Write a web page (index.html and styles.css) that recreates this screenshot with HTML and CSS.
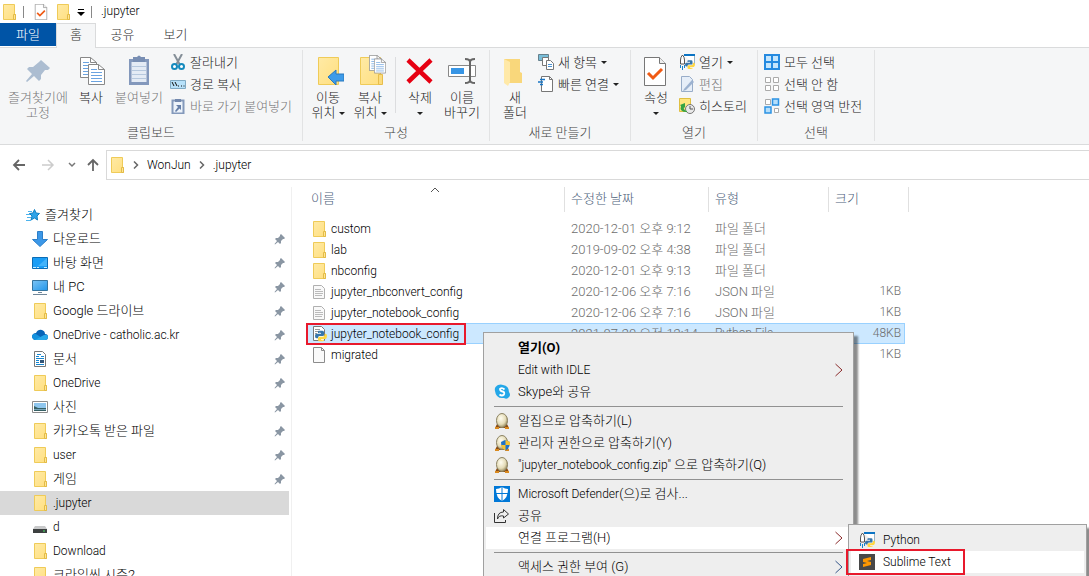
FILE: index.html
```
<!DOCTYPE html>
<html lang="ko">
<head>
    <meta charset="UTF-8">
    <title>.jupyter</title>
    <link rel="stylesheet" href="styles.css">
</head>
<body>
    <svg class="sprite" aria-hidden="true">
        <linearGradient id="gFolder" x1="0" y1="0" x2="1" y2="1">
            <stop offset="0" stop-color="#ffeaa5"/><stop offset="1" stop-color="#ffdf80"/>
        </linearGradient>
        <linearGradient id="gBlue" x1="0" y1="0" x2="1" y2="1">
            <stop offset="0" stop-color="#7cc4f5"/><stop offset="1" stop-color="#2196ea"/>
        </linearGradient>
        <radialGradient id="gEgg" cx=".4" cy=".35" r=".7">
            <stop offset="0" stop-color="#fffdf0"/><stop offset=".6" stop-color="#e5dcb8"/><stop offset="1" stop-color="#8a7d50"/>
        </radialGradient>
        <symbol id="folder" viewBox="0 0 16 16">
            <path d="M2.500.5h11v10h1v5h-12z" fill="url(#gFolder)" stroke="#efcb58"/>
            <path d="M12.5 15.5v-5h2v5z" fill="#ffe694" stroke="#e3bb48"/>
        </symbol>
        <symbol id="pin" viewBox="0 0 12 12">
            <path d="M7 1l4 4-1 1h-1L7 8v2L6 11 4 9 1 11.500.5 11 3 8 1 6l1-1h2l2-2V2z" fill="#8a96a3"/>
        </symbol>
        <symbol id="text" viewBox="0 0 16 16">
            <path d="M2.500 1.500h8l3 3v10h-11z" fill="#f9f9f9" stroke="#b0b0b0"/>
            <path d="M4 5.500h6M4 7.500h8M4 9.500h8M4 11.500h7" stroke="#bbb"/>
        </symbol>
        <symbol id="blank" viewBox="0 0 16 16">
            <path d="M2.500.5h8l3 3v12h-11z" fill="#fafafa" stroke="#8c8c8c"/>
            <path d="M10.500.5v3h3" fill="none" stroke="#8c8c8c"/>
        </symbol>
        <symbol id="snake" viewBox="0 0 16 16">
            <path d="M5 1h5q2 0 2 2v4q0 1-2 1H6q-2 0-2 3H2Q0 11 0 8t2-3h6V4H4V2q0-1 1-1z" fill="#3776ab"/>
            <path d="M11 15H6q-2 0-2-2v-2q0-2 2-2h4q3 0 3-4h1q2 0 2 3t-2 4H8v1h4v1q0 1-1 1z" fill="#ffd743"/>
            <path d="M6 3h1M10 13.500h1" stroke="#fff"/>
        </symbol>
        <symbol id="pyfile" viewBox="0 0 16 16">
            <path d="M2.500.5h8l3 3v11h-11z" fill="#fff" stroke="#777"/>
            <path d="M4 3.500h5M4 5.500h3M4 7.500h2" stroke="#999"/>
            <use href="#snake" x="4" y="4" width="12" height="12"/>
        </symbol>
        <symbol id="launcher" viewBox="0 0 16 16">
            <path d="M5 1.500h10.500V10" fill="#fff" stroke="#9bb3c4"/><path d="M5 1h11" stroke="#0b74c4" stroke-width="2"/>
            <path d="M1.500 10V6Q1.500 3 3.500 1q2 2 2 5v4z" fill="#fff" stroke="#555"/>
            <path d="M1.500 11v3M3.500 12v4M5.500 11v3" stroke="#1683cc"/>
            <use href="#snake" x="6" y="5" width="10" height="11"/>
        </symbol>
        <symbol id="checkdoc" viewBox="0 0 22 29">
            <path d="M.5.5h15l6 6v22H.5z" fill="#fff" stroke="#777"/>
            <path d="M15.500.5v6h6" fill="#eee" stroke="#777"/>
            <path d="M4 16l5 5 9-9" fill="none" stroke="#f05a14" stroke-width="3"/>
        </symbol>
        <symbol id="sheet" viewBox="0 0 17 21">
            <path d="M.5.5h10l6 5v15H.5z" fill="#fff" stroke="#888"/>
            <path d="M10.500.5v5h6" fill="none" stroke="#888"/>
            <path d="M3 5.500h6M3 8.500h11M3 11.500h11M3 14.500h11M3 17.500h11" stroke="#6ba3e0"/>
        </symbol>
        <symbol id="egg" viewBox="0 0 16 16">
            <path d="M1 15l2-4h10l2 4z" fill="#8a4a10"/><path d="M1 14h4v2H1zM11 14h4v2h-4z" fill="#d98a20"/>
            <ellipse cx="8" cy="7.500" rx="5.500" ry="7" fill="url(#gEgg)" stroke="#8b8262"/>
        </symbol>
        <symbol id="more" viewBox="0 0 8 14"><path d="M.5 1l6.500 6-6.500 6" fill="none" stroke="currentColor"/></symbol>
        <symbol id="next" viewBox="0 0 6 8"><path d="M1 .5L4.500 4 1 7.500" fill="none" stroke="#666" stroke-width="1.500"/></symbol>
    </svg>

    <header class="titlebar">
        <svg class="icon"><use href="#folder"/></svg>
        <span class="bar"></span>
        <button class="quick" aria-label="속성"><svg class="quick-check"><use href="#checkdoc"/></svg></button>
        <button class="quick" aria-label="새 폴더"><svg class="icon"><use href="#folder"/></svg></button>
        <button class="quick" aria-label="빠른 실행 사용자 지정"><svg class="custom" viewBox="0 0 8 8"><path d="M1 1.500h6" stroke="#000"/><path d="M0 4h8L4 8z"/></svg></button>
        <span class="bar"></span>
        <h1 class="title en">.jupyter</h1>
    </header>

    <nav class="tabs">
        <button class="tab tab-file">파일</button>
        <button class="tab tab-active">홈</button>
        <button class="tab">공유</button>
        <button class="tab">보기</button>
    </nav>

    <section class="ribbon">
        <div class="group group-clipboard">
            <div class="tools">
                <button class="big big-wide disabled">
                    <svg class="big-icon" viewBox="0 0 32 32"><path d="M19 5l9 8-2 2h-3l-4 5v4l-2 2-5-5-7 6-1-1 6-7-5-5 2-2h4l6-5V7z" fill="#acbdd1"/></svg>
                    <span>즐겨찾기에<br>고정</span>
                </button>
                <button class="big big-copy">
                    <svg class="big-icon" viewBox="0 0 32 32"><use href="#sheet" x="5" y="2" width="17" height="21"/><use href="#sheet" x="13" y="9" width="17" height="21"/></svg>
                    <span>복사</span>
                </button>
                <button class="big big-paste disabled">
                    <svg class="big-icon" viewBox="0 0 32 32"><path d="M6 4h20v26H6z" fill="#8398bc"/><path d="M8.500 7h15v20h-15z" fill="#e4ebf5"/><path d="M10 2h4q2-3 4 0h4v5H10z" fill="#788eb3"/><path d="M9 11.500h14M9 15.500h14M9 19.500h14M9 23.500h14" stroke="#b6c8de"/></svg>
                    <span>붙여넣기</span>
                </button>
                <div class="smalls">
                    <button class="small"><svg class="icon" viewBox="0 0 16 16"><path d="M4 0l6 11M12 0L6 11" stroke="#858f98" stroke-width="2"/><circle cx="4.500" cy="12.500" r="2.500" fill="#fff" stroke="#168abd" stroke-width="2"/><circle cx="11.500" cy="12.500" r="2.500" fill="#fff" stroke="#168abd" stroke-width="2"/></svg>잘라내기</button>
                    <button class="small"><svg class="icon" viewBox="0 0 16 16"><path d="M.5 4.500h15v8H.5z" fill="#b7e1fa" stroke="#80aac4"/><path d="M2 6l2 4M5 6l2 4M8 10h1M11 10h1M13.500 10h1" stroke="#111"/></svg>경로 복사</button>
                    <button class="small disabled"><svg class="icon" viewBox="0 0 16 16"><path d="M2.500 2.500h11v13h-11z" fill="#edf3fa" stroke="#8499bb" stroke-width="2"/><path d="M5 1h6v3H5z" fill="#7288ad"/><path d="M6 7h5v5L9.500 10.500 6 14l-1-1 3-4z" fill="#667fa8"/></svg>바로 가기 붙여넣기</button>
                </div>
            </div>
            <div class="group-name">클립보드</div>
        </div>

        <div class="group group-organize">
            <div class="tools">
                <button class="big">
                    <svg class="big-icon" viewBox="0 0 32 32"><path d="M6.500 2.500h20v27h-20z" fill="url(#gFolder)" stroke="#efcb58"/><path d="M16 22l8-7v4h8v7h-8v4z" fill="#3d9be9" stroke="#2a79bd"/></svg>
                    <span>이동<br>위치 <i class="drop"></i></span>
                </button>
                <button class="big">
                    <svg class="big-icon" viewBox="0 0 32 32"><path d="M6.500 2.500h20v27h-20z" fill="url(#gFolder)" stroke="#efcb58"/><path d="M24.500 19.500h4v10h-4z" fill="#fbdb7d" stroke="#e7bd4b"/><use href="#sheet" x="15" y="0" width="13" height="16"/><use href="#sheet" x="20" y="3" width="12" height="16"/></svg>
                    <span>복사<br>위치 <i class="drop"></i></span>
                </button>
                <span class="divider"></span>
                <button class="big">
                    <svg class="big-icon" viewBox="0 0 32 32"><path d="M4 5l23 22M27 5L4 27" stroke="#e60012" stroke-width="4.500"/></svg>
                    <span>삭제<br><i class="drop"></i></span>
                </button>
                <button class="big">
                    <svg class="big-icon" viewBox="0 0 32 32"><path d="M2.500 10.500h27v11h-27z" fill="#fff" stroke="#888"/><path d="M5 13h13v6H5z" fill="#3795e5"/><path d="M19 4q5 0 5 3v18q0 3-5 3M29 4q-5 0-5 3M24 25q0 3 5 3" fill="none" stroke="#666" stroke-width="2"/></svg>
                    <span>이름<br>바꾸기</span>
                </button>
            </div>
            <div class="group-name">구성</div>
        </div>

        <div class="group group-new">
            <div class="tools">
                <button class="big">
                    <svg class="big-icon" viewBox="0 0 32 32"><path d="M5 4h16v13l2 1v10H10z" fill="#f9d77b"/><path d="M5 4l6 3v20l-2 4-4-3z" fill="#ffe9a8"/></svg>
                    <span>새<br>폴더</span>
                </button>
                <div class="smalls">
                    <button class="small"><svg class="icon" viewBox="0 0 16 16"><path d="M.5.5h10v6H.5z" fill="#78bdd8" stroke="#65808c"/><path d="M4.500 3.500h6v8h-6z" fill="#fff" stroke="#777"/><path d="M8.500 6.500h4l3 3v6h-7z" fill="#fff" stroke="#777"/><path d="M10 10.500h4M10 12.500h4" stroke="#4b92d2"/></svg>새 항목 <i class="drop"></i></button>
                    <button class="small"><svg class="icon" viewBox="0 0 16 16"><path d="M3.500.5h8l3 3v12h-11z" fill="#fff" stroke="#777"/><path d="M11.500.5v3h3" fill="none" stroke="#777"/><path d="M2 3.500h5M0 6h5M2 8.500h3" stroke="#1775c5" stroke-width="1.500"/></svg>빠른 연결 <i class="drop"></i></button>
                </div>
            </div>
            <div class="group-name">새로 만들기</div>
        </div>

        <div class="group group-open">
            <div class="tools">
                <button class="big">
                    <svg class="big-icon" viewBox="0 0 32 32"><use href="#checkdoc" x="4" y="2" width="22" height="29"/></svg>
                    <span>속성<br><i class="drop"></i></span>
                </button>
                <div class="smalls">
                    <button class="small"><svg class="icon"><use href="#launcher"/></svg>열기 <i class="drop"></i></button>
                    <button class="small disabled"><svg class="icon" viewBox="0 0 16 16"><path d="M2.500.5h8l3 3v12h-11z" fill="#e6eef8" stroke="#98adc9"/><path d="M5 13l8-9 2 2-8 8-3 1z" fill="#9cb2d0"/></svg>편집</button>
                    <button class="small"><svg class="icon" viewBox="0 0 16 16"><path d="M.5.5h11v13H.5z" fill="#ffe680" stroke="#dfbf42"/><circle cx="11" cy="11" r="4.500" fill="#e9e9e9" stroke="#777"/><path d="M11 8v3h3" fill="none" stroke="#555"/><path d="M8 14Q0 14 2 8l-1-1 5-2v5l-1-1q-1 3 3 4z" fill="#35a344"/></svg>히스토리</button>
                </div>
            </div>
            <div class="group-name">열기</div>
        </div>

        <div class="group group-select">
            <div class="tools">
                <div class="smalls">
                    <button class="small"><svg class="icon" viewBox="0 0 16 16"><path d="M1 1h14v14H1zM8 1v14M1 8h14" fill="#c5e6fd" stroke="#258ae0" stroke-width="2"/></svg>모두 선택</button>
                    <button class="small"><svg class="icon" viewBox="0 0 16 16"><path d="M1.500 1.500h5v5h-5zM9.500 1.500h5v5h-5zM1.500 9.500h5v5h-5zM9.500 9.500h5v5h-5z" fill="#fff" stroke="#aaa"/></svg>선택 안 함</button>
                    <button class="small"><svg class="icon" viewBox="0 0 16 16"><path d="M1.500 1.500h5v5h-5zM10.500 10.500h4v4h-4z" fill="#fff" stroke="#aaa"/><path d="M8.500 1h6v6h-6zM1 9h6v6H1z" fill="#b5defb" stroke="#2b92e4" stroke-width="1.500"/></svg>선택 영역 반전</button>
                </div>
            </div>
            <div class="group-name">선택</div>
        </div>
    </section>

    <div class="address">
        <button class="nav-button" aria-label="뒤로"><svg viewBox="0 0 14 14"><path d="M13 7H2M7 2L2 7l5 5" fill="none" stroke="#666" stroke-width="1.800"/></svg></button>
        <button class="nav-button nav-forward" aria-label="앞으로"><svg viewBox="0 0 14 14"><path d="M1 7h11M7 2l5 5-5 5" fill="none" stroke="#ccc" stroke-width="1.500"/></svg></button>
        <button class="nav-button nav-recent" aria-label="최근 위치"><svg viewBox="0 0 14 14"><path d="M4 5l3 3 3-3" fill="none" stroke="#777" stroke-width="1.500"/></svg></button>
        <button class="nav-button nav-up" aria-label="위로"><svg viewBox="0 0 14 14"><path d="M7 13V2M2 7l5-5 5 5" fill="none" stroke="#666" stroke-width="1.800"/></svg></button>
        <div class="path">
            <svg class="icon"><use href="#folder"/></svg>
            <svg class="next"><use href="#next"/></svg>
            <a class="crumb en" href="#">WonJun</a>
            <svg class="next"><use href="#next"/></svg>
            <a class="crumb en" href="#">.jupyter</a>
        </div>
    </div>

    <main class="main">
        <aside class="sidebar">
            <a class="place place-root" href="#"><svg class="icon" viewBox="0 0 16 16"><path d="M9.500 2.500l1.500 3.500 3.500.5-2.500 2.500.5 4-3-2-3.500 2 1-4-2.500-2.500 3.500-.5z" fill="#2da3e8" stroke="#0f80c4"/><path d="M3 4.500h4M1 7.500h4M2 10.500h4M1 13.500h5" stroke="#4db3ec"/></svg>즐겨찾기</a>
            <a class="place" href="#"><svg class="icon" viewBox="0 0 16 16"><path d="M5.500.5h5v8h5L8 15.500.5 8.500h5z" fill="#3c98e8" stroke="#2c7fc9"/></svg>다운로드<svg class="pin"><use href="#pin"/></svg></a>
            <a class="place" href="#"><svg class="icon" viewBox="0 0 16 16"><path d="M.5 2.500h15v11H.5z" fill="#1a9df5" stroke="#0b6cb5"/><path d="M15 3v8H6z" fill="#43b3fa"/><path d="M1 12.500h3M5 12.500h2M12 12.500h3" stroke="#c8ecff"/></svg>바탕 화면<svg class="pin"><use href="#pin"/></svg></a>
            <a class="place" href="#"><svg class="icon" viewBox="0 0 16 16"><path d="M.5 1.500h15v10H.5z" fill="url(#gBlue)" stroke="#35749f"/><path d="M6 13.500h4M1 15.500h14" stroke="#71879a"/></svg>내 PC<svg class="pin"><use href="#pin"/></svg></a>
            <a class="place" href="#"><svg class="icon"><use href="#folder"/></svg>Google 드라이브<svg class="pin"><use href="#pin"/></svg></a>
            <a class="place en" href="#"><svg class="icon" viewBox="0 0 16 16"><path d="M3 13q-3-1-3-4 1-3 4-3 2-4 6-3 3 1 3 4 3 0 3 3t-3 3z" fill="#0864b8"/><path d="M3 13q-3-1-3-4 1-3 4-2l9 6z" fill="#1492df"/><path d="M3 13l9-5q4-1 4 2t-3 3z" fill="#28a8ea"/></svg>OneDrive - catholic.ac.kr<svg class="pin"><use href="#pin"/></svg></a>
            <a class="place" href="#"><svg class="icon" viewBox="0 0 16 16"><path d="M2.500.5h8l3 3v12h-11z" fill="#fff" stroke="#777"/><path d="M5 3.500h4M4 5.500h3M9 5.500h3M4 7.500h8M4 9.500h3M4 11.500h3M4 13.500h8" stroke="#1686d0"/><path d="M8 9h4v3H8z" fill="#357"/></svg>문서<svg class="pin"><use href="#pin"/></svg></a>
            <a class="place en" href="#"><svg class="icon"><use href="#folder"/></svg>OneDrive<svg class="pin"><use href="#pin"/></svg></a>
            <a class="place" href="#"><svg class="icon" viewBox="0 0 16 16"><path d="M.5 2.500h15v11H.5z" fill="#fff" stroke="#8c8c8c"/><path d="M2 4h12v8H2z" fill="#8fc6ee"/><path d="M2 7l4 2h8v3H2z" fill="#355f63"/><path d="M2 10.500h12" stroke="#78a5bb"/></svg>사진<svg class="pin"><use href="#pin"/></svg></a>
            <a class="place" href="#"><svg class="icon"><use href="#folder"/></svg>카카오톡 받은 파일<svg class="pin"><use href="#pin"/></svg></a>
            <a class="place en" href="#"><svg class="icon"><use href="#folder"/></svg>user<svg class="pin"><use href="#pin"/></svg></a>
            <a class="place" href="#"><svg class="icon"><use href="#folder"/></svg>게임<svg class="pin"><use href="#pin"/></svg></a>
            <a class="place place-selected en" href="#"><svg class="icon"><use href="#folder"/></svg>.jupyter</a>
            <a class="place en" href="#"><svg class="icon" viewBox="0 0 16 16"><path d="M3 7h10l2 3H1z" fill="#c8c9ca"/><path d="M1 10h14v4H1z" fill="#3d4040"/><path d="M11 12h2" stroke="#48e468"/></svg>d</a>
            <a class="place en" href="#"><svg class="icon"><use href="#folder"/></svg>Download</a>
            <a class="place" href="#"><svg class="icon"><use href="#folder"/></svg>크라임씬 시즌2</a>
        </aside>

        <section class="content">
            <table class="files">
                <thead>
                    <tr>
                        <th class="col-name"><div>이름<svg class="sort" viewBox="0 0 10 6"><path d="M1 5l4-4 4 4" fill="none" stroke="#555"/></svg></div></th>
                        <th class="col-date"><div>수정한 날짜</div></th>
                        <th class="col-type"><div>유형</div></th>
                        <th class="col-size"><div>크기</div></th>
                    </tr>
                </thead>
                <tbody>
                    <tr><td class="name"><svg class="icon"><use href="#folder"/></svg>custom</td><td>2020-12-01 오후 9:12</td><td>파일 폴더</td><td class="size"></td></tr>
                    <tr><td class="name"><svg class="icon"><use href="#folder"/></svg>lab</td><td>2019-09-02 오후 4:38</td><td>파일 폴더</td><td class="size"></td></tr>
                    <tr><td class="name"><svg class="icon"><use href="#folder"/></svg>nbconfig</td><td>2020-12-01 오후 9:13</td><td>파일 폴더</td><td class="size"></td></tr>
                    <tr><td class="name"><svg class="icon"><use href="#text"/></svg>jupyter_nbconvert_config</td><td>2020-12-06 오후 7:16</td><td>JSON 파일</td><td class="size">1KB</td></tr>
                    <tr><td class="name"><svg class="icon"><use href="#text"/></svg>jupyter_notebook_config</td><td>2020-12-06 오후 7:16</td><td>JSON 파일</td><td class="size">1KB</td></tr>
                    <tr class="selected"><td class="name"><svg class="icon"><use href="#pyfile"/></svg>jupyter_notebook_config<span class="mark mark-file"></span></td><td>2021-07-20 오전 12:14</td><td class="en">Python File</td><td class="size">48KB</td></tr>
                    <tr><td class="name"><svg class="icon"><use href="#blank"/></svg>migrated</td><td></td><td></td><td class="size">1KB</td></tr>
                </tbody>
            </table>
        </section>
    </main>

    <div class="menu context-menu">
        <button class="item item-default"><span class="icon"></span>열기(O)</button>
        <button class="item en"><span class="icon"></span>Edit with IDLE<svg class="more more-red"><use href="#more"/></svg></button>
        <button class="item"><svg class="icon" viewBox="0 0 16 16"><path d="M4 1q3-1 5 0 6 1 6 7 2 3 0 5-2 3-5 1-8 1-9-7Q0 3 4 1z" fill="#24a7e8"/><path d="M10.500 5.500Q8 3 6 5q0 2 2.500 2.500T10 10.500q-2 2-4.500 0" fill="none" stroke="#fff" stroke-width="1.800"/></svg>Skype와 공유</button>
        <hr>
        <button class="item"><svg class="icon"><use href="#egg"/></svg>알집으로 압축하기(L)</button>
        <button class="item"><svg class="icon" viewBox="0 0 16 16"><use href="#egg" width="16" height="16"/><path d="M7 7l4-2 5 2q0 6-4.500 8.500Q7 13 7 7z" fill="#2073c8"/><path d="M11.500 5L16 7v3h-4.500zM7 10h4.500v5.500Q8 14 7 10z" fill="#f5c334"/></svg>관리자 권한으로 압축하기(Y)</button>
        <button class="item"><svg class="icon"><use href="#egg"/></svg><span><span class="en">"jupyter_notebook_config.zip"</span> 으로 압축하기(Q)</span></button>
        <hr>
        <button class="item"><svg class="icon" viewBox="0 0 16 16"><path d="M0 0h16v16H0z" fill="#0078d7"/><path d="M8 1q3 2 6 2 0 9-6 12-6-3-6-12 3 0 6-2z" fill="#fff"/><path d="M8 1v14M2 7.500h12" stroke="#0078d7"/></svg><span><span class="en">Microsoft Defender</span>(으)로 검사...</span></button>
        <button class="item"><svg class="icon" viewBox="0 0 16 16"><path d="M.5 5v9.500h11V12" fill="none" stroke="#333"/><path d="M9.500 1.500l5 4.500-5 4V8Q5 7 3.500 11 3.500 4 9.500 4z" fill="none" stroke="#333"/></svg>공유</button>
        <button class="item item-open"><span class="icon"></span>연결 프로그램(H)<svg class="more more-red"><use href="#more"/></svg></button>
        <hr>
        <button class="item"><span class="icon"></span>액세스 권한 부여 (G)<svg class="more"><use href="#more"/></svg></button>
    </div>

    <div class="menu submenu">
        <button class="item en"><svg class="icon"><use href="#launcher"/></svg>Python</button>
        <button class="item item-open en"><svg class="icon" viewBox="0 0 16 16"><path d="M0 0h16v16H0z" fill="#484848"/><path d="M4 5l8-2v3L8 7l4 1v3l-8 2v-3l4-1-4-1z" fill="#ff9800"/></svg>Sublime Text<span class="mark mark-item"></span></button>
    </div>
</body>
</html>
```
FILE: styles.css
```
* {
    box-sizing: border-box;
}
body {
    margin: 0;
    height: 100vh;
    overflow: hidden;
    position: relative;
    display: flex;
    flex-direction: column;
    background: #fff;
    color: #000;
    font-family: Roboto, "Noto Sans CJK KR", sans-serif;
    font-size: 13px;
    font-weight: 300;
    line-height: 15px;
}
button {
    margin: 0;
    padding: 0;
    border: 0;
    background: none;
    color: inherit;
    font: inherit;
    white-space: nowrap;
}
a {
    color: inherit;
    text-decoration: none;
}
svg {
    display: block;
    flex: none;
}
.sprite {
    position: absolute;
    width: 0;
    height: 0;
}
.icon {
    width: 16px;
    height: 16px;
    flex: none;
}
/* latin only labels */
.en {
    font-size: 12px;
}

/* title bar */
.titlebar {
    flex: none;
    display: flex;
    align-items: center;
    height: 23px;
    padding-left: 1px;
    gap: 6px;
}
.bar {
    width: 1px;
    height: 12px;
    margin-right: 3px;
    background: #888;
}
.quick-check {
    width: 16px;
    height: 16px;
}
.custom {
    width: 8px;
    height: 8px;
}
.title {
    margin: 0;
    font-weight: 300;
}

/* tabs */
.tabs {
    flex: none;
    display: flex;
    height: 25px;
    border-bottom: 1px solid #dadbdc;
}
.tab {
    width: 53px;
    height: 23px;
    color: #333;
}
.tab-file {
    width: 56px;
    background: #0054a6;
    color: #fff;
}
.tab-active {
    width: 40px;
    height: 25px;
    padding-bottom: 3px;
    border: 1px solid #dadbdc;
    border-bottom: 0;
    background: #f5f6f7;
}

/* ribbon */
.ribbon {
    flex: none;
    display: flex;
    height: 97px;
    padding: 2px 0 3px;
    border-bottom: 1px solid #dadbdc;
    background: #f5f6f7;
    color: #222;
}
.group {
    display: flex;
    flex-direction: column;
    justify-content: space-between;
    padding: 1px 4px 0;
    border-right: 1px solid #e2e3e4;
}
.group-clipboard {
    width: 303px;
}
.group-organize {
    width: 187px;
}
.group-new {
    width: 141px;
}
.group-open {
    width: 127px;
}
.group-select {
    width: 117px;
}
.group-name {
    height: 16px;
    text-align: center;
    color: #444;
}
.tools {
    display: flex;
}
.big {
    display: flex;
    flex-direction: column;
    align-items: center;
    justify-content: flex-start;
    width: 42px;
    height: 70px;
    padding-top: 4px;
}
.big-icon {
    width: 32px;
    height: 32px;
    margin-bottom: 3px;
}
.big-wide {
    width: 68px;
}
.big-copy {
    width: 38px;
}
.big-paste {
    width: 58px;
}
.disabled {
    color: #777;
}
.divider {
    width: 1px;
    height: 56px;
    margin: 6px 3px 0 4px;
    background: #dcdddf;
}
.smalls {
    flex: 1;
    display: flex;
    flex-direction: column;
    padding-left: 2px;
}
.small {
    display: flex;
    align-items: center;
    gap: 4px;
    height: 22px;
}
.drop {
    display: inline-block;
    width: 0;
    height: 0;
    vertical-align: middle;
    border: 3px solid transparent;
    border-top-color: #222;
    border-bottom: 0;
}

/* address bar */
.address {
    flex: none;
    display: flex;
    align-items: center;
    height: 42px;
    padding: 0 0 2px 12px;
}
.nav-button {
    width: 14px;
    height: 14px;
    margin-right: 15px;
}
.nav-forward {
    margin-right: 10px;
}
.nav-recent {
    margin-right: 7px;
}
.nav-up {
    margin-right: 6px;
}
.path {
    flex: 1;
    display: flex;
    align-items: center;
    gap: 8px;
    height: 30px;
    padding-left: 2px;
    border: 1px solid #d9d9d9;
    border-right: 0;
}
.next {
    width: 6px;
    height: 8px;
}

/* body */
.main {
    flex: 1;
    min-height: 0;
    display: flex;
}
.sidebar {
    width: 292px;
    flex: none;
    padding: 16px 2px 0 0;
    border-right: 1px solid #f0f0f0;
    overflow: hidden;
}
.place {
    display: flex;
    align-items: center;
    gap: 5px;
    height: 24px;
    padding: 0 3px 0 32px;
    line-height: 16px;
}
.place-root {
    padding-left: 25px;
    gap: 4px;
}
.place-selected {
    background: #d9d9d9;
}
.pin {
    width: 12px;
    height: 12px;
    margin-left: auto;
}
.content {
    flex: 1;
    padding-left: 14px;
}
.files {
    width: 599px;
    table-layout: fixed;
    border-spacing: 0;
}
.files th {
    height: 31px;
    padding: 0;
    vertical-align: top;
    text-align: left;
    font-weight: 300;
    color: #4c607a;
}
.files th div {
    position: relative;
    height: 25px;
    padding: 4px 0 0 6px;
    border-right: 1px solid #e0e0e0;
}
.col-name {
    width: 259px;
}
.col-date {
    width: 144px;
}
.col-type {
    width: 120px;
}
.files .col-size div {
    margin-right: -4px;
}
.files .col-name div {
    padding-left: 5px;
}
.sort {
    position: absolute;
    top: 0;
    left: 48%;
    width: 10px;
    height: 6px;
}
.files td {
    height: 21px;
    padding: 0 6px;
    color: #6d6d6d;
    white-space: nowrap;
}
.files .name {
    position: relative;
    display: flex;
    align-items: center;
    gap: 4px;
    padding-left: 5px;
    color: #000;
    font-size: 12px;
    line-height: 16px;
}
.files .size {
    padding-right: 4px;
    text-align: right;
    font-size: 12px;
}
.files .selected td {
    background: #cce8ff;
    border-top: 1px solid #99d1ff;
    border-bottom: 1px solid #99d1ff;
}
.files .selected .size {
    padding-right: 3px;
    border-right: 1px solid #99d1ff;
}

/* red frames */
.mark {
    position: absolute;
    border: 2px solid #e8192c;
}
.mark-file {
    top: -1px;
    left: 0;
    width: 160px;
    height: 22px;
}
.mark-item {
    inset: -2px auto -2px -5px;
    width: 119px;
}

/* menus */
.menu {
    position: absolute;
    padding: 4px 2px;
    border: 1px solid #a0a0a0;
    background: #eee;
    box-shadow: 4px 4px 2px rgba(0, 0, 0, 0.45);
}
.menu hr {
    height: 1px;
    margin: 3px 8px;
    border: 0;
    background: #919191;
}
.context-menu {
    top: 332px;
    left: 483px;
    width: 371px;
}
.submenu {
    top: 524px;
    left: 848px;
    width: 239px;
}
.item {
    position: relative;
    display: flex;
    align-items: center;
    gap: 8px;
    width: 100%;
    height: 22px;
    padding: 0 8px;
    line-height: 16px;
}
.item-default {
    font-weight: bold;
}
.item-open {
    background: #fff;
}
.more {
    width: 8px;
    height: 14px;
    margin-left: auto;
    color: #34568a;
}
.more-red {
    color: #8a2a2a;
}
```
